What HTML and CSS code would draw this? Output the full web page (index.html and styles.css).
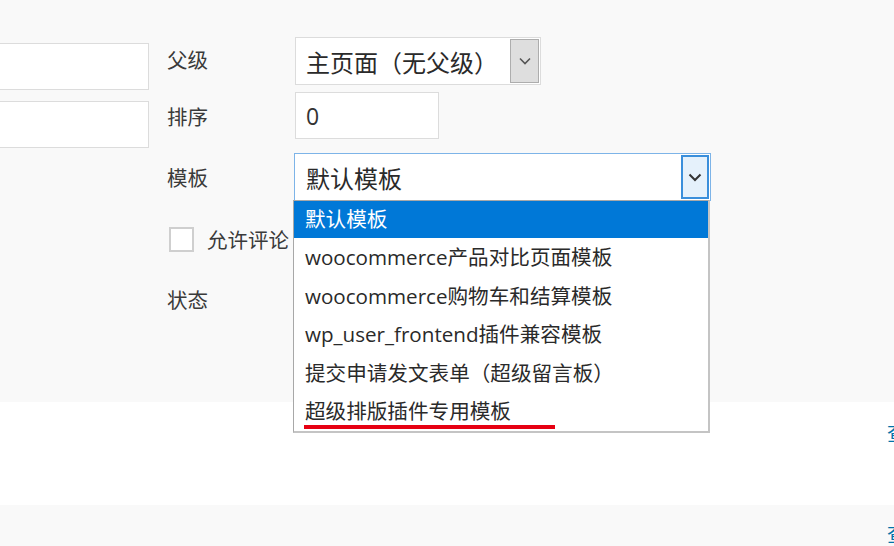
FILE: index.html
```html
<!DOCTYPE html>
<html lang="zh-CN">
<head>
<meta charset="utf-8">
<title>页面属性</title>
<link rel="stylesheet" href="styles.css">
</head>
<body>
<div class="page">
  <section class="panel">
    <div class="left-col">
      <div class="text-field"></div>
      <div class="text-field"></div>
    </div>
    <div class="attrs">
      <div class="row row-parent">
        <span class="label">父级</span>
        <div class="select select-parent">
          <span class="select-value">主页面（无父级）</span>
          <span class="arrow arrow-grey">
            <svg width="12" height="8" viewBox="0 0 12 8"><path d="M1 1.5 L6 6.5 L11 1.5" fill="none" stroke="#555" stroke-width="1.6"/></svg>
          </span>
        </div>
      </div>
      <div class="row row-order">
        <span class="label">排序</span>
        <div class="input-order">0</div>
      </div>
      <div class="row row-template">
        <span class="label">模板</span>
        <div class="select select-template">
          <span class="select-value">默认模板</span>
          <span class="arrow arrow-blue">
            <svg width="14" height="9" viewBox="0 0 14 9"><path d="M1.5 1.5 L7 7 L12.5 1.5" fill="none" stroke="#333" stroke-width="2"/></svg>
          </span>
          <ul class="dropdown">
            <li class="opt opt-selected">默认模板</li>
            <li class="opt">woocommerce产品对比页面模板</li>
            <li class="opt">woocommerce购物车和结算模板</li>
            <li class="opt">wp_user_frontend插件兼容模板</li>
            <li class="opt">提交申请发文表单（超级留言板）</li>
            <li class="opt opt-marked">超级排版插件专用模板</li>
          </ul>
        </div>
      </div>
      <div class="row row-comment">
        <span class="checkbox"></span>
        <span class="check-label">允许评论</span>
      </div>
      <div class="row row-status">
        <span class="label">状态</span>
      </div>
    </div>
  </section>
  <section class="band band-white"><span class="edge-link">查看</span></section>
  <section class="band band-grey"><span class="edge-link">查看</span></section>
</div>
</body>
</html>
```
FILE: styles.css
```css
html, body {
  margin: 0;
  padding: 0;
}
body {
  width: 894px;
  height: 546px;
  overflow: hidden;
  background: #f9f9f9;
  font-family: "Open Sans", "Noto Sans CJK SC", sans-serif;
  color: #2a2a2a;
}
.page {
  display: flex;
  flex-direction: column;
}
.panel {
  height: 402px;
  display: flex;
  background: #f9f9f9;
  box-sizing: border-box;
  padding-top: 37px;
}
.left-col {
  width: 149px;
  display: flex;
  flex-direction: column;
  gap: 11px;
  padding-top: 6px;
}
.text-field {
  height: 45px;
  background: #fff;
  border: 1px solid #dcdcdc;
  border-left: none;
}
.attrs {
  margin-left: 18px;
  display: flex;
  flex-direction: column;
}
.row {
  display: flex;
  align-items: center;
}
.label {
  width: 128px;
  font-size: 20.5px;
  color: #3a3a3a;
  flex: none;
}
.row-parent .label {
  margin-top: -4px;
}
.select {
  position: relative;
  background: #fff;
  box-sizing: border-box;
  display: flex;
  align-items: center;
}
.select-value {
  flex: 1;
  font-size: 24px;
  color: #2a2a2a;
  padding-left: 9px;
}
.select-parent {
  width: 246px;
  height: 48px;
  border: 1px solid #dcdcdc;
  padding: 1px;
}
.arrow {
  height: 100%;
  box-sizing: border-box;
  display: flex;
  align-items: center;
  justify-content: center;
}
.arrow-grey {
  width: 29px;
  background: #dedede;
  border: 1px solid #adadad;
}
.row-order {
  margin-top: 7px;
}
.input-order {
  width: 144px;
  height: 47px;
  box-sizing: border-box;
  border: 1px solid #dcdcdc;
  background: #fff;
  font-size: 23px;
  color: #333;
  padding-left: 10px;
  display: flex;
  align-items: center;
}
.row-template {
  margin-top: 14px;
}
.row-template .label {
  width: 127px;
}
.select-template {
  width: 417px;
  height: 48px;
  border: 1px solid #7db4e8;
  padding: 1px;
}
.select-template .select-value {
  padding-left: 10px;
}
.arrow-blue {
  width: 28px;
  background: #e5f1fb;
  border: 2px solid #3a8fdb;
}
.dropdown {
  position: absolute;
  left: -2px;
  top: 46px;
  width: 417px;
  box-sizing: border-box;
  margin: 0;
  padding: 0;
  list-style: none;
  background: #fff;
  border: 1px solid #a8a8a8;
  border-bottom-width: 2px;
  border-right-width: 2px;
  border-right-color: #c4c4c4;
  border-bottom-color: #c4c4c4;
  z-index: 5;
}
.opt {
  height: 38.5px;
  line-height: 38px;
  padding-left: 11px;
  font-size: 20.6px;
  color: #2a2a2a;
  white-space: nowrap;
  position: relative;
}
.opt-selected {
  background: #0078d7;
  color: #fff;
  height: 37px;
  line-height: 37px;
}
.opt-marked::after {
  content: "";
  position: absolute;
  left: 10px;
  top: 33px;
  width: 251px;
  height: 4px;
  background: #e60012;
}
.row-comment {
  margin-top: 23px;
  margin-left: 2px;
}
.checkbox {
  width: 25px;
  height: 25px;
  box-sizing: border-box;
  border: 2px solid #cfcfcf;
  background: #fff;
}
.check-label {
  margin-left: 13px;
  font-size: 20.5px;
  color: #3a3a3a;
}
.row-status {
  margin-top: 30px;
}
.band {
  position: relative;
  overflow: hidden;
}
.band-white {
  height: 103px;
  background: #fff;
}
.band-grey {
  height: 41px;
  background: #f9f9f9;
}
.edge-link {
  position: absolute;
  left: 887px;
  top: 16px;
  font-size: 20px;
  color: #0073aa;
  white-space: nowrap;
}
.band-grey .edge-link {
  top: 14px;
}
```
